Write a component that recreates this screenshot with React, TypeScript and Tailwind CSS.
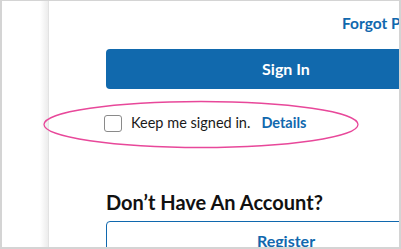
import React from "react";

export default function App() {
  const font = { fontFamily: "Lato, 'Noto Sans', sans-serif" };
  return (
    <div
      className="relative w-[401px] h-[249px] overflow-hidden bg-white border-t border-l-2 border-r-2 border-b-2 border-[#d4d4d4] box-border"
      style={font}
    >
      <div className="flex h-full">
        <div className="w-[38px] shrink-0 bg-white" />
        <div className="w-[8px] shrink-0 bg-gradient-to-r from-white to-[#ececec]" />
        <div className="w-px shrink-0 bg-[#e2e2e2]" />
        <div className="w-px shrink-0 bg-white" />
        <div className="shrink-0 pl-[56px]">
          <div className="w-[360px] flex flex-col">
            <div className="mt-[12px] pl-[236px] whitespace-nowrap text-[15.5px] leading-[20px] font-bold text-[#1068ae]">
              Forgot Password?
            </div>
            <button className="mt-[16px] h-[40px] w-full rounded-[4px] bg-[#1169ad] text-white text-[16px] font-bold leading-[20px]">
              Sign In
            </button>
            <div className="mt-[24px] flex items-center h-[20px] -ml-[2px]">
              <span className="w-[18px] h-[17px] rounded-[3px] border border-[#8a8a8a] bg-white shrink-0" />
              <span className="ml-[9px] text-[14.5px] leading-[20px] text-[#1a1a1a]">
                Keep me signed in.
              </span>
              <span className="ml-[11px] text-[14.5px] leading-[20px] font-bold text-[#1068ae]">
                Details
              </span>
            </div>
            <h2 className="mt-[56px] text-[20px] leading-[26px] font-bold text-[#111111]">
              Don’t Have An Account?
            </h2>
            <button className="mt-[6px] h-[40px] w-full rounded-[4px] border border-[#1068ae] bg-white text-[#1068ae] text-[16px] font-bold leading-[20px]">
              Register
            </button>
          </div>
        </div>
      </div>
      <svg
        className="absolute left-0 top-0 pointer-events-none"
        width="401"
        height="249"
        viewBox="0 0 401 249"
      >
        <ellipse
          cx="199"
          cy="123.5"
          rx="157"
          ry="23"
          fill="none"
          stroke="#e8489a"
          strokeWidth="1.3"
        />
      </svg>
    </div>
  );
}
